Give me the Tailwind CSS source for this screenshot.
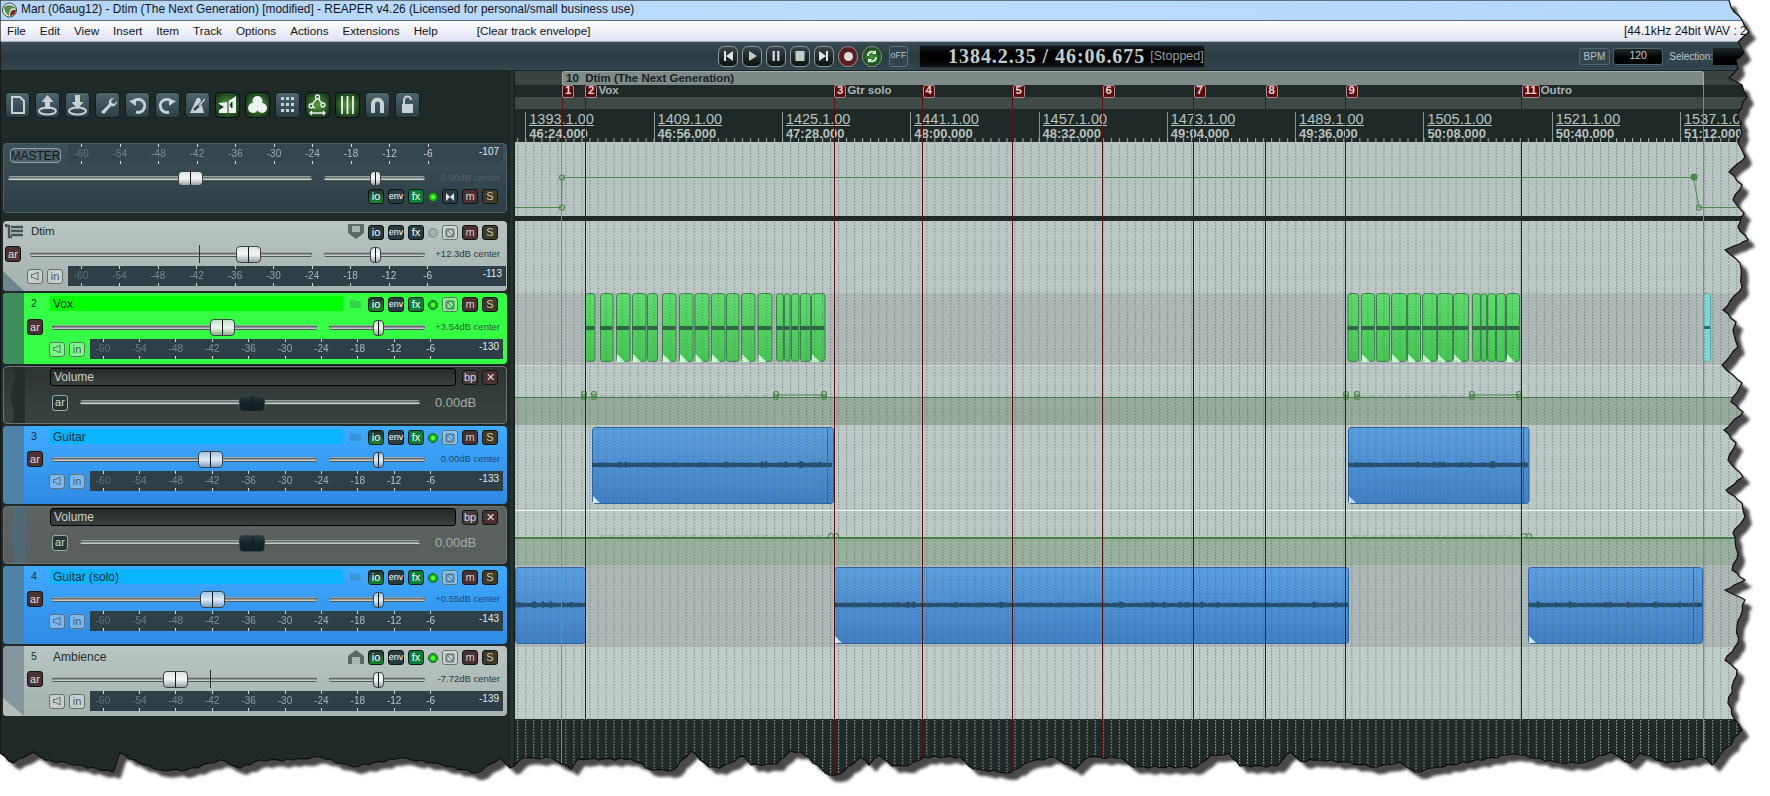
<!DOCTYPE html>
<html lang="en">

<head>
  <meta charset="UTF-8">
  <title>REAPER</title>
  <script src="https://cdn.jsdelivr.net/npm/@tailwindcss/browser@4"></script>
</head>

<body class="bg-white">
  <div class="relative w-[1770px] h-[796px] overflow-hidden flex flex-col font-['Liberation_Sans',sans-serif] bg-[#1f2a28]">

    <!-- Title bar -->
    <div class="h-[21px] shrink-0 flex items-center bg-linear-to-r from-[#b6d6f8] via-[#bcdcfc] to-[#b4d6fa] border-b border-[#5d6b7c] text-[11.9px] text-[#10141c]">
      <svg class="ml-[2px] mr-[4px]" width="15" height="18" viewBox="0 0 15 18">
        <circle cx="7.5" cy="9" r="7" fill="#e8efe8" stroke="#3a4a40" />
        <path d="M2 6C6 3 12 4 14 8C10 6 7 8 7 15C4 13 2 10 2 6Z" fill="#4f8f4a" />
        <path d="M8 15C8 10 10 8 14 9C14 12 11 15 8 15Z" fill="#7a2a20" />
      </svg>
      <span>Mart (06aug12) - Dtim (The Next Generation) [modified] - REAPER v4.26 (Licensed for personal/small business use)</span>
    </div>

    <!-- Menu bar -->
    <div class="h-[21px] shrink-0 flex items-center pl-[7px] bg-linear-to-b from-[#ffffff] to-[#dfe2f2] border-b border-[#a8b0c0] text-[11.7px] text-[#10141c]">
      <div class="flex gap-[14px]">
        <span>File</span><span>Edit</span><span>View</span><span>Insert</span><span>Item</span><span>Track</span><span>Options</span><span>Actions</span><span>Extensions</span><span>Help</span>
      </div>
      <span class="ml-[39px]">[Clear track envelope]</span>
      <span class="ml-auto w-[146px] whitespace-nowrap text-[12px]">[44.1kHz 24bit WAV : 2/48</span>
    </div>

    <!-- Transport -->
    <div class="h-[29px] shrink-0 flex items-center pl-[718px] bg-linear-to-b from-[#3a4c54] via-[#2a3a40] to-[#33474f] border-b border-[#1a2422]">
      <div id="transport" class="flex gap-[4px]"></div>
      <div class="ml-[7px] w-[20px] h-[21px] flex items-center justify-center rounded-[3px] border border-[#5d7078] bg-[#33454c] text-[9px] text-[#b7c4c8]">oFF</div>
      <div class="ml-[11px] w-[286px] h-[23px] flex items-center pl-[28px] bg-linear-to-b from-[#1c2022] via-[#000000] to-[#15191a] rounded-[2px] border border-[#2b3538]">
        <span class="font-['Liberation_Serif',serif] font-bold text-[20px] tracking-[0.95px] text-[#c3cccc] whitespace-nowrap">1384.2.35 / 46:06.675</span>
        <span class="ml-[5px] text-[12.5px] text-[#98a6aa] whitespace-nowrap">[Stopped]</span>
      </div>
      <div class="ml-[374px] w-[33px] h-[17px] flex items-center justify-center rounded-[3px] border border-[#53676f] bg-[#33454c] text-[10px] text-[#b7c4c8]">BPM</div>
      <div class="ml-[3px] w-[53px] h-[17px] flex items-center justify-center rounded-[3px] border border-[#53676f] bg-linear-to-b from-[#20282a] to-[#000000] text-[10.5px] text-[#c3cccc]">120</div>
      <div class="ml-[2px] w-[49px] h-[17px] flex items-center pl-[4px] rounded-l-[3px] bg-[#33454c] text-[10px] text-[#b7c4c8]">Selection:</div>
      <div class="w-[60px] h-[17px] bg-linear-to-b from-[#20282a] to-[#000000]"></div>
    </div>

    <!-- Main -->
    <div class="flex-1 flex min-h-0">

      <!-- Track control panel -->
      <div class="w-[509px] shrink-0 flex flex-col bg-[#1f2a28] pl-[3px] pr-[2px]">
        <div id="toolbar" class="h-[72px] shrink-0 flex gap-[5px] pt-[21px] pl-[2px]"></div>
        <div id="master"></div>
        <div id="tracks" class="mt-[8px] flex flex-col gap-[2px]"></div>
      </div>
      <div class="w-[6px] shrink-0 bg-linear-to-r from-[#1b2523] via-[#2b3734] to-[#131b1a]"></div>

      <!-- Arrange view -->
      <div class="relative flex-1 flex flex-col min-w-0">
        <div class="h-[14px] shrink-0 bg-[#3a4543]"></div>
        <div class="h-[12px] shrink-0 bg-[#1f2a28]"></div>
        <div class="h-[12px] shrink-0 bg-[#3f4a47]"></div>
        <div id="ruler" class="relative h-[33px] shrink-0 bg-[#1f2a28]"></div>
        <div class="h-[74px] shrink-0 bg-[#b9c5c3]"></div>
        <div class="h-[5px] shrink-0 bg-[#1f2a28]"></div>
        <div class="h-[72px] shrink-0 bg-[#bcc8c6]"></div>
        <div class="h-[73px] shrink-0 bg-[#aeb9b7] border-b border-[#cbd4d2]"></div>
        <div class="h-[59px] shrink-0 flex flex-col bg-[#bcc8c6]">
          <div class="h-[31px] shrink-0"></div>
          <div class="flex-1 bg-[#97aa9c]"></div>
        </div>
        <div class="h-[82px] shrink-0 bg-[#bcc8c6]"></div>
        <div class="h-[58px] shrink-0 flex flex-col bg-[#bcc8c6]">
          <div class="h-[31px] shrink-0"></div>
          <div class="flex-1 bg-[#9ab09f]"></div>
        </div>
        <div class="h-[82px] shrink-0 bg-[#aeb9b7]"></div>
        <div class="h-[72px] shrink-0 bg-[#bfcbc9]"></div>
        <div class="flex-1 bg-[#1f2a28]"></div>

        <!-- Items, grid, markers and envelopes drawn in page coordinates -->
        <svg id="canvas" class="absolute left-[-515px] top-[-71px] w-[1770px] h-[796px] pointer-events-none" viewBox="0 0 1770 796"></svg>

        <!-- Project region -->
        <div class="absolute left-[47px] top-[0px] w-[1142px] h-[14px] pl-[3px] flex items-center bg-[#7d8a88] border-t border-x border-[#a3aeac] rounded-t-[3px] text-[11.5px] font-bold text-[#17211f] whitespace-pre">10  Dtim (The Next Generation)</div>
        <div id="markers" class="absolute inset-0"></div>
      </div>
    </div>

    <!-- Torn paper edge -->
    <svg id="torn" class="absolute left-0 top-0 w-[1770px] h-[796px] pointer-events-none" viewBox="0 0 1770 796"></svg>
  </div>

  <script>
    // ---- Toolbar ----
    const ICON = '#c9d2d2';
    const toolbarIcons = [
      [0, `<path d="M7 5h8l4 4v12H7z" fill="none" stroke="${ICON}" stroke-width="2"/>`],
      [0, `<path d="M12.5 3l6 7h-3.5v7h-5v-7H6.500z" fill="${ICON}"/><ellipse cx="12.500" cy="19" rx="8.500" ry="3.500" fill="none" stroke="${ICON}" stroke-width="2"/>`],
      [0, `<path d="M12.500 17l6-7h-3.500V3h-5v7H6.500z" fill="${ICON}"/><ellipse cx="12.500" cy="19" rx="8.500" ry="3.500" fill="none" stroke="${ICON}" stroke-width="2"/>`],
      [0, `<path d="M6 20l8-8c-1-3 1-6 5-6l-3 3 1 2 2 1 3-3c0 4-3 6-6 5l-7 8z" fill="${ICON}"/>`],
      [0, `<path d="M8 10a6.500 6.500 0 1 1 3 10" fill="none" stroke="${ICON}" stroke-width="3"/><path d="M4 9l7-2v7z" fill="${ICON}"/>`],
      [0, `<path d="M17 10a6.500 6.500 0 1 0-3 10" fill="none" stroke="${ICON}" stroke-width="3"/><path d="M21 9l-7-2v7z" fill="${ICON}"/>`],
      [0, `<path d="M5 21L12 6h3l4 15z" fill="${ICON}"/><path d="M9 18L21 7" stroke="#33474e" stroke-width="2.500"/><path d="M14 14l6-7" stroke="${ICON}" stroke-width="1.500"/>`],
      [1, `<path d="M4 21V11l8-1 9-6v17z" fill="#eef2ee"/><path d="M4 12l5 3-5 3z" fill="#173a1c"/><path d="M13 9v12M17 10l-2 3 2 3z" stroke="#173a1c" fill="#173a1c"/>`],
      [1, `<circle cx="12.500" cy="9" r="5" fill="#eef2ee"/><circle cx="8" cy="16" r="5" fill="#eef2ee"/><circle cx="17" cy="16" r="5" fill="#eef2ee"/>`],
      [0, `<g fill="${ICON}"><rect x="6" y="5" width="3" height="3"/><rect x="11" y="5" width="3" height="3"/><rect x="16" y="5" width="3" height="3"/><rect x="6" y="11" width="3" height="3"/><rect x="11" y="11" width="3" height="3"/><rect x="16" y="11" width="3" height="3"/><rect x="6" y="17" width="3" height="3"/><rect x="11" y="17" width="3" height="3"/><rect x="16" y="17" width="3" height="3"/></g>`],
      [1, `<g fill="none" stroke="#eef2ee" stroke-width="1.300"><circle cx="12.500" cy="5" r="2"/><circle cx="6" cy="14" r="2"/><circle cx="18" cy="13" r="2"/><path d="M11.500 7L7 12.500M13.500 7l3.500 4.500M8 14.500l2 2"/><path d="M5 21h15M7 19l-2 2 2 2M18 19l2 2-2 2"/></g>`],
      [1, `<path d="M7 4v18M12.500 4v18M18 4v18" stroke="#eef2ee" stroke-width="1.800"/>`],
      [0, `<path d="M6 21V12a6.500 6.500 0 0 1 13 0v9h-4v-9a2.500 2.500 0 0 0-5 0v9z" fill="${ICON}"/>`],
      [0, `<path d="M9 12V8a3.500 3.500 0 0 1 7 0" fill="none" stroke="${ICON}" stroke-width="2"/><rect x="7" y="12" width="11" height="9" fill="${ICON}"/>`],
    ];
    document.getElementById('toolbar').innerHTML = toolbarIcons.map(([on, svg]) => {
      const cls = on
        ? 'bg-[radial-gradient(circle,#559e3d,#16351b_85%)] border-[#0b1210]'
        : 'bg-linear-to-b from-[#4e656d] to-[#2c4048] border-[#141f1e]';
      return `<div class="w-[25px] h-[26px] rounded-[4px] border ${cls}"><svg class="-m-px" width="25" height="26" viewBox="0 0 25 26">${svg}</svg></div>`;
    }).join('');

    // ---- Transport ----
    const transportIcons = [
      '<path d="M6 5h2v10H6zM15 5v10l-7-5z" fill="#dfe6e6"/>',
      '<path d="M7 5l8 5-8 5z" fill="#c4cdcd"/>',
      '<path d="M6.500 5h2.500v10H6.500zM11 5h2.500v10H11z" fill="#c4cdcd"/>',
      '<rect x="5.500" y="5" width="9" height="10" fill="#c4cdcd"/>',
      '<path d="M5 5v10l7-5zM12 5h2v10h-2z" fill="#dfe6e6"/>',
    ];
    document.getElementById('transport').innerHTML = transportIcons.map(svg =>
      `<div class="w-[20px] h-[21px] rounded-[6px] border border-[#8d9a9c] bg-linear-to-b from-[#3a4446] to-[#0c1214]"><svg class="-m-px" width="20" height="21" viewBox="0 0 20 21">${svg}</svg></div>`
    ).join('') +
      `<div class="w-[20px] h-[21px] rounded-full border border-[#a08a8a] bg-[#5a1c1c] flex items-center justify-center"><div class="w-[9px] h-[9px] rounded-full bg-[#e2dcdc]"></div></div>` +
      `<div class="w-[20px] h-[21px] rounded-full border border-[#7d9a80] bg-[radial-gradient(circle,#3f9a3a,#103012_90%)]"><svg class="-m-px" width="20" height="21" viewBox="0 0 20 21"><path d="M6 10a4 4 0 0 1 7-3M14 11a4 4 0 0 1-7 3" fill="none" stroke="#e8f2e8" stroke-width="1.600"/><path d="M14 4v4h-4zM6 17v-4h4z" fill="#e8f2e8"/></svg></div>`;

    // ---- Track controls ----
    const small = (label, cls) => `<div class="w-4 h-[15px] shrink-0 flex items-center justify-center rounded-[3px] border text-[11px] leading-none ${cls}">${label}</div>`;
    const ioBtn = on => small('io', on ? 'border-[#0e1614] bg-linear-to-b from-[#24302f] to-[#0a8a2a] text-white' : 'border-[#0e1614] bg-[#2a3b40] text-white');
    const envBtn = () => small('env', 'border-[#0e1614] bg-[#2a3b40] text-white !text-[9px]');
    const fxBtn = on => small('fx', on ? 'border-[#0e1614] bg-[#08803a] text-white' : 'border-[#0e1614] bg-[#2a3b40] text-white');
    const led = on => on
      ? '<div class="w-[10px] h-[10px] shrink-0 flex items-center justify-center rounded-full border border-[#2c4a2c] bg-[#0fbf0f]"><div class="w-[4px] h-[4px] rounded-full bg-[#66ff44]"></div></div>'
      : '<div class="w-[10px] h-[10px] shrink-0 rounded-full border-2 border-[#8e9a98] bg-[#aab5b3]"></div>';
    const slashIcon = '<svg width="12" height="12" viewBox="0 0 12 12"><path d="M2 2h8v8H2z" fill="none" stroke="#5a6a6a"/><circle cx="6" cy="6" r="3.500" fill="none" stroke="#5a6a6a"/><path d="M3.500 3.500l5 5" stroke="#5a6a6a"/></svg>';
    const slashBtn = small(slashIcon, 'border-[#66716f] bg-white/35');
    const mBtn = small('m', 'border-[#0e1614] bg-[#4a3030] text-[#d7cccc]');
    const sBtn = small('S', 'border-[#0e1614] bg-[#3f3b28] text-[#c9c8b4]');
    const arBtn = small('ar', 'border-[#0e1614] bg-[#4b3232] text-[#e6dede] !h-[16px]');

    const buttonRow = (io, fx, on, slash) => `<div class="flex items-center gap-1">${ioBtn(io)}${envBtn()}${fxBtn(fx)}${led(on)}${slash}${mBtn}${sBtn}</div>`;

    function meter(w, first, pitch, val, bg) {
      const ticks = [-60, -54, -48, -42, -36, -30, -24, -18, -12, -6].map((v, i) => {
        const left = first + pitch * i;
        return `<div class="absolute top-0 bottom-0 w-[20px] flex flex-col items-center justify-between" style="left:${left - 10}px">
          <div class="w-px h-[3px] bg-[#d3dada]"></div>
          <span class="text-[10px] leading-none text-[#d3dada]" style="opacity:${0.3 + i * 0.07}">${v}</span>
          <div class="w-px h-[3px] bg-[#d3dada]"></div>
        </div>`;
      }).join('');
      return `<div class="relative h-[20px] shrink-0 ${bg}" style="width:${w}px">${ticks}<span class="absolute right-[4px] top-[3px] text-[10px] leading-none text-[#e4eaea]">${val}</span></div>`;
    }

    function fader(w, handle, zero, handleCls, h = 17, hw = 25) {
      const tick = zero == null ? '' : `<div class="absolute top-[-8px] w-px h-[18px] bg-[#2a3333]" style="left:${zero}px"></div>`;
      return `<div class="relative h-[5px] shrink-0 rounded-full bg-linear-to-b from-[#4b5757] to-[#dfe6e4] border border-black/20" style="width:${w}px">${tick}
        <div class="absolute flex justify-center rounded-[4px] border border-[#39444a] ${handleCls}" style="left:${handle}px;width:${hw}px;height:${h}px;top:${2 - h / 2}px"><div class="w-px h-full bg-[#14191c]"></div></div>
      </div>`;
    }

    const HANDLE = {
      gray: 'bg-linear-to-b from-[#dfe4e3] via-[#f4f6f5] to-[#9aa3a2]',
      green: 'bg-linear-to-b from-[#bfe2bf] via-[#eef6ee] to-[#8db48d]',
      blue: 'bg-linear-to-b from-[#9fc4ea] via-[#dfecf8] to-[#7a9fc6]',
      dark: 'bg-linear-to-b from-[#29393c] via-[#142426] to-[#102022]',
    };

    const speaker = small('<svg width="10" height="10" viewBox="0 0 10 10"><path d="M8 1v8L3.500 6.500H1.500v-3h2z" fill="none" stroke="#5a6a6a"/></svg>', 'border-[#66716f] bg-white/35');
    const inBtn = small('in', 'border-[#66716f] bg-white/35 text-[#4a5a5a]');

    const master = `<div class="h-[70px] rounded-[4px] border border-[#4a5f67] bg-linear-to-b from-[#3d5159] to-[#2d3f46] flex flex-col">
      <div class="flex items-start">
        <div class="ml-[6px] mt-[4px] w-[51px] h-[15px] flex items-center justify-center rounded-[4px] border border-[#8d9ea4] bg-[#4e626a] text-[12px] text-[#0f1a1c]">MASTER</div>
        <div class="ml-[7px]">${meter(435, 13.5, 38.5, '-107', 'bg-[#34474f]')}</div>
      </div>
      <div class="flex items-center mt-[7px] pl-[4px] text-[9.5px] text-[#52646a]">
        ${fader(304, 169, null, HANDLE.gray, 15)}
        <div class="ml-[12px]">${fader(101, 45, null, HANDLE.gray, 15, 11)}</div>
        <span class="flex-1 text-right pr-[6px] whitespace-pre">0.00dB center</span>
      </div>
      <div class="mt-[4px] pl-[364px]">${buttonRow(true, true, true, small('<svg width="10" height="10" viewBox="0 0 10 10"><path d="M1 1l4 4-4 4zM9 1L5 5l4 4z" fill="#e4eaea"/></svg>', 'border-[#0e1614] bg-[#2a3b40]'))}</div>
    </div>`;
    document.getElementById('master').innerHTML = master;

    const tracks = [
      { h: 70, name: 'Dtim', num: '', root: true, bg: 'bg-linear-to-b from-[#b9c5c3] to-[#a6b2b0]', val: '+12.3dB', fh: 205, zero: 168, hc: HANDLE.gray, io: false, fx: false, on: false, icon: 'shield', mv: '-113', row2: 'mt-[6px]', text: 'text-[#2c3a3a]' },
      { h: 71, name: 'Vox', num: '2', bar: 'bg-[#00ff00]', strip: 'bg-[#3f8f5c]', bg: 'bg-[#34ff44]', val: '+3.54dB', fh: 157, zero: null, hc: HANDLE.green, io: true, fx: true, on: true, icon: 'folderG', mv: '-130', row2: 'mt-[7px]', text: 'text-[#2d5a38]' },
      { env: true, h: 58, bg: 'bg-linear-to-b from-[#2d3533] to-[#3b4341]', strip: '#262e2d', fh: 158 },
      { h: 78, name: 'Guitar', num: '3', bar: 'bg-[#0ab4ff]', strip: 'bg-[#4f83a8]', bg: 'bg-linear-to-b from-[#3fabff] to-[#2f8ae4]', val: '0.00dB', fh: 145, zero: null, hc: HANDLE.blue, io: true, fx: true, on: true, icon: 'folderB', mv: '-133', row2: 'mt-[6px]', text: 'text-[#1c4a70]' },
      { env: true, h: 58, bg: 'bg-linear-to-b from-[#5d6361] to-[#585e5c]', strip: '#4d6a76', fh: 158 },
      { h: 78, name: 'Guitar (solo)', num: '4', bar: 'bg-[#0ab4ff]', strip: 'bg-[#4f83a8]', bg: 'bg-linear-to-b from-[#3fabff] to-[#2f8ae4]', val: '+0.55dB', fh: 147, zero: null, hc: HANDLE.blue, io: true, fx: true, on: true, icon: 'folderB', mv: '-143', row2: 'mt-[6px]', text: 'text-[#1c4a70]' },
      { h: 70, name: 'Ambience', num: '5', strip: 'bg-[#84969b]', bg: 'bg-linear-to-b from-[#b9c5c3] to-[#a6b2b0]', val: '-7.72dB', fh: 110, zero: 157, hc: HANDLE.gray, io: true, fx: true, on: true, icon: 'house', mv: '-139', row2: 'mt-[6px]', text: 'text-[#2c3a3a]', corner: true },
    ];

    const trackIcons = {
      shield: '<svg width="18" height="17" viewBox="0 0 18 17"><path d="M1 1h16v9l-8 6-8-6z" fill="#5d6a6a"/><path d="M5 3h8v6H5z" fill="#aab5b3"/></svg>',
      house: '<svg width="18" height="15" viewBox="0 0 18 15"><path d="M9 1l8 6v8H1V7z" fill="#5d6a6a"/><path d="M5 8h8v7H5z" fill="#aab5b3"/></svg>',
      folderG: '<svg width="11" height="9" viewBox="0 0 11 9"><path d="M0 1h4l1 1h6v7H0z" fill="#2fd64a"/></svg>',
      folderB: '<svg width="11" height="9" viewBox="0 0 11 9"><path d="M0 1h4l1 1h6v7H0z" fill="#3a96d8"/></svg>',
    };

    function renderTrack(t) {
      if (t.env) {
        return `<div class="relative rounded-[4px] border border-[#6d7573] ${t.bg}" style="height:${t.h}px">
          <svg class="absolute left-0 top-0" width="21" height="56" viewBox="0 0 21 56"><path d="M0 0H21V56H8C14 44 6 38 7 28S14 10 7 0Z" fill="${t.strip}"/></svg>
          <div class="flex items-center pl-[46px] pt-[1px]">
            <div class="w-[406px] h-[18px] flex items-center pl-[3px] rounded-[3px] border border-black bg-linear-to-b from-[#26292a] to-[#3d4140] text-[12px] text-[#c9d2c9]">Volume</div>
            <div class="ml-[6px] flex gap-1">
              ${small('bp', 'border-[#0e1614] bg-[#4a3a3a] text-[#e0d8d8]')}
              ${small('✕', 'border-[#0e1614] bg-[#4a3030] text-[#e6dede]')}
            </div>
          </div>
          <div class="flex items-center pl-[48px] mt-[7px]">
            ${small('ar', 'border-[#a0aaa8] bg-[#233835] text-[#d5dedb] !h-[16px]')}
            <div class="ml-[12px]">${fader(340, t.fh, null, HANDLE.dark, 17, 26)}</div>
            <span class="ml-[15px] text-[13px] text-[#a3aeaa]">0.00dB</span>
          </div>
        </div>`;
      }
      const strip = t.root ? '' : `<div class="w-[21px] shrink-0 rounded-l-[4px] ${t.strip}"></div>`;
      const head = t.root
        ? `<svg class="ml-[2px] mr-[8px]" width="18" height="15" viewBox="0 0 18 15"><path d="M1 0v2h3v11h3M6 3h12M6 7h12M6 11h12" fill="none" stroke="#46545a" stroke-width="2.400"/></svg><span class="w-[312px] text-[11.5px] text-[#1d2b2d]">${t.name}</span>`
        : `<span class="w-[26px] text-center pr-[6px] text-[10.5px] text-[#1d2b2d]">${t.num}</span><div class="w-[293px] h-[15px] flex items-center pl-[3px] text-[12px] text-[#1d2b2d] ${t.bar || ''}">${t.name}</div>`;
      const faderW = t.root ? 282 : 265;
      const panW = t.root ? 101 : 96;
      const corner = t.root
        ? '<svg class="absolute left-0 bottom-0" width="21" height="20" viewBox="0 0 21 20"><path d="M0 0L21 20H0Z" fill="#6f8590"/></svg>'
        : (t.corner ? '<svg class="absolute left-0 bottom-0" width="21" height="18" viewBox="0 0 21 18"><path d="M0 0L21 18H0Z" fill="#b3bebc"/></svg>' : '');
      return `<div class="relative flex rounded-[4px] overflow-hidden ${t.bg}" style="height:${t.h}px">
        ${strip}${corner}
        <div class="flex-1 min-w-0">
          <div class="flex items-center mt-[3px] h-[15px]">
            ${head}
            <div class="w-[25px] flex justify-center">${trackIcons[t.icon]}</div>
            <div class="mt-[2px]">${buttonRow(t.io, t.fx, t.on, slashBtn)}</div>
          </div>
          <div class="flex items-center ${t.row2} h-[18px] ${t.text} text-[9.5px]">
            <div class="${t.root ? 'ml-[2px]' : 'ml-[3px]'}">${arBtn}</div>
            <div class="ml-[9px]">${fader(faderW, t.fh, t.zero, t.hc)}</div>
            <div class="ml-[12px]">${fader(panW, t.root ? 45 : 43, null, t.hc, 16, 11)}</div>
            <span class="flex-1 text-right pr-[7px] whitespace-pre">${t.val} center</span>
          </div>
          <div class="flex items-center mt-[3px] ${t.root ? 'pl-[24px]' : 'pl-[25px]'}">
            <div class="flex gap-1">${speaker}${inBtn}</div>
            <div class="ml-[5px]">${t.root ? meter(438, 13, 38.5, t.mv, 'bg-[#2f3f47]') : meter(413, 13, 36.4, t.mv, 'bg-[#2f3f47]')}</div>
          </div>
        </div>
      </div>`;
    }
    document.getElementById('tracks').innerHTML = tracks.map(renderTrack).join('');

    // ---- Ruler ----
    const RULER_X0 = 525.3, BAR_W = 128.3;
    const rulerLabels = [
      ['1393.1.00', '46:24.000'], ['1409.1.00', '46:56.000'], ['1425.1.00', '47:28.000'],
      ['1441.1.00', '48:00.000'], ['1457.1.00', '48:32.000'], ['1473.1.00', '49:04.000'],
      ['1489.1.00', '49:36.000'], ['1505.1.00', '50:08.000'], ['1521.1.00', '50:40.000'], ['1537.1.00', '51:12.000'],
    ];
    document.getElementById('ruler').innerHTML = rulerLabels.map(([bar, time], i) => {
      const left = RULER_X0 + BAR_W * i - 515;
      return `<div class="absolute top-[3px] h-[30px] border-l border-[#8a9795] pl-[3px] text-[#b7c2bf] whitespace-nowrap" style="left:${left}px">
        <div class="text-[14.5px] leading-[14px] border-b border-[#b7c2bf] h-[14px] mb-[1px]">${bar}</div>
        <div class="text-[13px] leading-[14px] font-bold">${time}</div>
      </div>`;
    }).join('');

    // ---- Markers ----
    const markers = [['1', 562], ['2', 585, 'Vox'], ['3', 834, 'Gtr solo'], ['4', 922.6], ['5', 1012.5], ['6', 1102.5], ['7', 1193.5], ['8', 1265.5], ['9', 1345.5], ['11', 1521.5, 'Outro']];
    document.getElementById('markers').innerHTML = markers.map(([n, x, label]) =>
      `<div class="absolute top-[14px] flex items-center h-[12px] text-[11.5px] font-bold" style="left:${x - 515}px">
        <div class="h-[13px] px-[2px] min-w-[12px] flex items-center justify-center rounded-[2px] border border-[#a88c8c] bg-[#5a0a0a] text-[#e0d6d6] leading-none">${n}</div>
        ${label ? `<span class="ml-[1px] text-[#aab5b2]">${label}</span>` : ''}
      </div>`
    ).join('');

    // ---- Arrange canvas ----
    const voxItems = [
      [585, 594.5], [600, 612.5], [616, 629.5, 1], [632, 645.5, 1], [647, 657], [662, 675.5, 1], [679, 692.5, 1], [694.5, 708.5, 1],
      [711, 724.5, 1], [726, 738.5], [741, 754.5, 1], [757.5, 771.5, 1], [776, 783], [784, 789.5], [791, 798.5], [800, 810], [811, 824.5, 1],
      [1347.5, 1358], [1361, 1374, 1], [1376, 1389], [1391, 1406, 1], [1407, 1420, 1], [1422, 1436, 1], [1437, 1452, 1], [1453, 1468, 1],
      [1472, 1480], [1480.5, 1486], [1487, 1495], [1496, 1505], [1506, 1519, 1],
    ];
    const waveRect = (a, b, y, h) => {
      // jagged bar for the waveform, pseudo random so it doesn't read as a pattern
      let top = '', bottom = '';
      for (let x = a; x <= b; x += 2) {
        const r = Math.abs(Math.sin(x * 12.9898) * 43758.5453) % 1;
        const j = r > 0.82 ? (r - 0.82) * 12 : r * 0.6;
        top += `L${x} ${y - h - j} `;
        bottom = `L${x} ${y + h + j * 0.5} ` + bottom;
      }
      return `<path d="M${a} ${y} ${top} ${bottom} Z" fill="#244f70"/>`;
    };
    let svg = `<defs>
      <linearGradient id="gGreen" x1="0" y1="0" x2="0" y2="1"><stop offset="0" stop-color="#5cdc6c"/><stop offset="1" stop-color="#45c653"/></linearGradient>
      <linearGradient id="gBlue" x1="0" y1="0" x2="0" y2="1"><stop offset="0" stop-color="#5a9fe0"/><stop offset="1" stop-color="#3f80c4"/></linearGradient>
      <pattern id="dots" patternUnits="userSpaceOnUse" x="525.3" y="0" width="8.02" height="3"><rect width="1" height="1.500" fill="#55625f" fill-opacity="0.6"/></pattern>
      <pattern id="dotsLight" patternUnits="userSpaceOnUse" x="525.3" y="0" width="8.02" height="3"><rect width="1" height="1.500" fill="#d8e2e0" fill-opacity="0.7"/></pattern>
      <pattern id="ticks" patternUnits="userSpaceOnUse" x="525.3" y="0" width="8.02" height="4"><rect width="1" height="4" fill="#a6b2af"/></pattern>
    </defs>`;

    // media items
    voxItems.forEach(([a, b, tri]) => {
      svg += `<rect x="${a + 0.5}" y="293.500" width="${b - a}" height="68" rx="3" fill="url(#gGreen)" stroke="#3f8050"/>`;
      svg += `<path d="M${a} ${328 - 2} H${b} V${328 + 2} H${a}Z" fill="#2a6a3f"/>`;
      if (tri) svg += `<path d="M${a + 1} 354 L${a + 9} 362 H${a + 1}Z" fill="#c8ffd0"/>`;
    });
    svg += `<rect x="1703.500" y="293.500" width="7" height="68" rx="2" fill="#7fd8d4" stroke="#5aa8a4"/><rect x="1703" y="326" width="7" height="3" fill="#2e6a6a"/>`;

    const blueItems = [
      [592, 833, 427, 503, 465, 827], [1348, 1528.5, 427, 503, 465, 1523],
      [515, 585, 567, 643, 605, null], [834, 1348, 567, 643, 605, null], [1528, 1702, 567, 643, 605, 1693],
    ];
    blueItems.forEach(([a, b, y1, y2, mid, split]) => {
      svg += `<rect x="${a + 0.5}" y="${y1 + 0.5}" width="${b - a}" height="${y2 - y1}" rx="3" fill="url(#gBlue)" stroke="#2c64a2"/>`;
      svg += waveRect(a, b, mid, 2);
      if (split) svg += `<path d="M${split + 0.5} ${y1} V${y2}" stroke="#2c64a2"/>`;
      if (a > 515) svg += `<path d="M${a + 1} ${y2 - 7} L${a + 8} ${y2} H${a + 1}Z" fill="#cfe9ff"/>`;
    });

    // grid
    svg += `<rect x="515" y="142" width="1255" height="577" fill="url(#dots)"/>`;
    svg += `<rect x="515" y="719" width="1255" height="77" fill="url(#dotsLight)"/>`;
    svg += `<rect x="515" y="138" width="1255" height="4" fill="url(#ticks)"/>`;
    svg += `<rect x="515" y="216" width="1255" height="5" fill="#1f2a28"/>`;
    svg += `<rect x="515" y="510" width="1255" height="1" fill="#f4f8f7"/>`;

    // region edges
    svg += `<path d="M561.500 142V796M1703.500 85V796" stroke="#7d8a88"/>`;

    // envelopes
    const node = (x, y, fill) => `<circle cx="${x}" cy="${y}" r="${fill ? 3 : 2.500}" fill="${fill ? '#4a8a4a' : 'none'}" stroke="#4a8a4a" stroke-width="1.200"/>`;
    svg += `<path d="M515 207.500H561.500L562 177.500H1693.500L1699 207.500H1770" fill="none" stroke="#4a8a4a"/>`;
    svg += node(562, 177.5) + node(562, 207.5) + node(1694, 177, 1) + node(1699, 207.5);
    svg += `<path d="M600 396H770M1360 396H1465M600 536H825M1353 536H1515" stroke="#98a3a0" stroke-dasharray="6 3"/>`;
    svg += `<path d="M515 397.500H1770" stroke="#447a44"/><path d="M776 395H824M1472 395H1519" stroke="#447a44"/>`;
    [584, 594, 776, 824, 1346, 1357, 1472, 1519].forEach(x => { svg += node(x, 394) + node(x, 397); });
    svg += `<path d="M515 538H1770" stroke="#3f7f3f" stroke-width="2"/>`;
    [831, 836, 1524, 1529].forEach(x => { svg += node(x, 536); });

    // markers
    markers.forEach(([n, x]) => {
      const y2 = n === '1' ? 142 : 796;
      svg += `<path d="M${Math.floor(x) + 0.5} 85V${y2}" stroke="#5a0f0f"/>`;
    });
    document.getElementById('canvas').innerHTML = svg;

    // ---- Torn paper edge ----
    const rightEdge = [[1729, 0], [1731, 7], [1742, 20], [1749, 32], [1738, 42], [1744, 53], [1736, 60], [1738, 68], [1729, 78], [1742, 85], [1747, 97], [1738, 113], [1742, 133], [1738, 143], [1745, 157], [1729, 172], [1742, 185], [1733, 200], [1744, 213], [1738, 227], [1748, 240], [1725, 250], [1740, 263], [1742, 287], [1723, 310], [1736, 322], [1733, 330], [1738, 347], [1722, 365], [1733, 375], [1742, 383], [1731, 402], [1743, 412], [1724, 430], [1736, 443], [1728, 460], [1743, 477], [1726, 490], [1742, 503], [1745, 517], [1733, 533], [1738, 553], [1732, 570], [1745, 580], [1725, 590], [1745, 600], [1737, 627], [1738, 643], [1725, 660], [1737, 670], [1728, 703], [1735, 720], [1742, 730], [1727, 747], [1712, 765]];
    const bottomEdge = [[1703, 757], [1667, 763], [1640, 753], [1630, 763], [1610, 752], [1583, 763], [1560, 763], [1520, 755], [1507, 755], [1433, 768], [1415, 772], [1400, 762], [1377, 767], [1343, 762], [1320, 760], [1300, 761], [1290, 752], [1277, 766], [1240, 766], [1230, 754], [1211, 755], [1196, 767], [1133, 767], [1122, 758], [1088, 757], [1075, 769], [1054, 757], [1028, 762], [1010, 773], [973, 769], [960, 757], [924, 757], [908, 766], [892, 766], [879, 755], [869, 765], [861, 757], [840, 774], [829, 775], [801, 752], [790, 751], [777, 764], [751, 765], [743, 756], [720, 768], [709, 767], [691, 751], [673, 770], [652, 770], [631, 759], [578, 759], [571, 769], [552, 758], [523, 758], [510, 768], [500, 758], [477, 773], [433, 763], [400, 758], [353, 767], [320, 757], [293, 760], [260, 760], [240, 768], [220, 760], [187, 770], [160, 770], [143, 765], [120, 753], [113, 772], [67, 763], [45, 760], [33, 752], [13, 763], [0, 753]];
    // small jitter between the hand-read points so the edge looks ripped
    const outline = [[0, 0], ...rightEdge, ...bottomEdge];
    let paper = 'M0 0';
    for (let i = 1; i < outline.length; i++) {
      const [x0, y0] = outline[i - 1], [x1, y1] = outline[i];
      const steps = Math.max(1, Math.floor(Math.hypot(x1 - x0, y1 - y0) / 5));
      for (let s = 1; s <= steps; s++) {
        const t = s / steps, j = s === steps ? 0 : Math.sin(i * 7 + s * 2.3) * 1.1;
        paper += `L${(x0 + (x1 - x0) * t + (i > 1 && x1 > 1000 && y1 < 750 ? j : 0)).toFixed(1)} ${(y0 + (y1 - y0) * t + (y1 > 745 ? j : 0)).toFixed(1)}`;
      }
    }
    paper += 'Z';
    const pageRect = 'M-2 -2H1772V798H-2Z';
    document.getElementById('torn').innerHTML = `
      <defs>
        <filter id="soft" x="-5%" y="-5%" width="110%" height="110%"><feGaussianBlur stdDeviation="1.800"/></filter>
        <clipPath id="outside"><path d="${pageRect}${paper}" clip-rule="evenodd"/></clipPath>
      </defs>
      <path d="${pageRect}${paper}" fill="#fff" fill-rule="evenodd"/>
      <g clip-path="url(#outside)"><path d="${paper}" transform="translate(7 7)" fill="#4a4a4a" filter="url(#soft)"/></g>
      <path d="${paper}" fill="none" stroke="#0c0c0c" stroke-width="1.200"/>`;
  </script>
</body>

</html>
